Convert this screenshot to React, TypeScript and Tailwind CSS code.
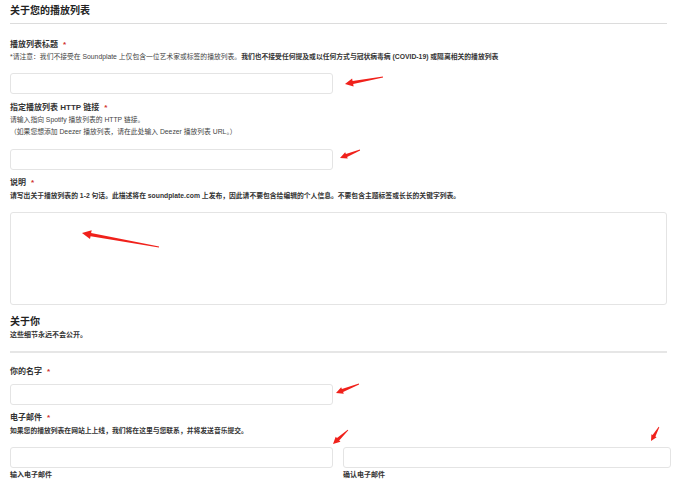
import { FC } from "react";

type Pt = [number, number];

// tapered red annotation arrow, thin at the tail and widening into the head
const arrowPoints = (tail: Pt, head: Pt, headLen = 8, headHalf = 4, shaft = 1.6) => {
  const dx = head[0] - tail[0];
  const dy = head[1] - tail[1];
  const len = Math.hypot(dx, dy);
  const ux = dx / len;
  const uy = dy / len;
  const nx = -uy;
  const ny = ux;
  const bx = head[0] - ux * headLen;
  const by = head[1] - uy * headLen;
  const pts: Pt[] = [
    [tail[0] + nx * 0.4, tail[1] + ny * 0.4],
    [bx + nx * shaft, by + ny * shaft],
    [bx + nx * headHalf, by + ny * headHalf],
    head,
    [bx - nx * headHalf, by - ny * headHalf],
    [bx - nx * shaft, by - ny * shaft],
    [tail[0] - nx * 0.4, tail[1] - ny * 0.4],
  ];
  return pts.map((p) => `${p[0].toFixed(1)},${p[1].toFixed(1)}`).join(" ");
};

const arrows: { tail: Pt; head: Pt; hl?: number; hh?: number }[] = [
  { tail: [383, 77], head: [345, 84] },
  { tail: [360, 150], head: [340, 158], hl: 7, hh: 3.5 },
  { tail: [159, 247], head: [82, 233], hl: 9, hh: 4.5 },
  { tail: [359, 384], head: [336, 393], hl: 7, hh: 3.5 },
  { tail: [348, 430], head: [333, 444], hl: 7, hh: 3.5 },
  { tail: [659, 427], head: [651, 441], hl: 6, hh: 3 },
];

const Label: FC<{ text: string; className?: string }> = ({ text, className = "" }) => (
  <div className={`text-[8px] font-bold leading-[10px] text-[#333] ${className}`}>
    {text}
    <span className="ml-[5px] text-[#d0312d]">*</span>
  </div>
);

const Input: FC<{ className?: string }> = ({ className = "" }) => (
  <div className={`h-[21px] rounded-[3px] border border-[#e4e4e4] bg-white ${className}`} />
);

export default function App() {
  return (
    <div className="relative h-[484px] w-[680px] overflow-hidden bg-white font-['Liberation_Sans','Noto_Sans_CJK_SC',sans-serif]">
      <div className="flex flex-col pl-[10px]">
        <h2 className="mt-[4px] text-[10px] font-bold leading-[14px] text-[#222]">关于您的播放列表</h2>
        <div className="mt-[5px] h-px w-[657px] bg-[#dcdcdc]" />

        {/* playlist title */}
        <Label text="播放列表标题" className="mt-[16px]" />
        <p className="mt-[2px] whitespace-nowrap text-[6.8px] leading-[10px] text-[#444]">
          *请注意：我们不接受在 Soundplate 上仅包含一位艺术家或标签的播放列表。
          <span className="font-semibold text-[#333]">
            我们也不接受任何提及或以任何方式与冠状病毒病 (COVID-19) 或隔离相关的播放列表
          </span>
        </p>
        <Input className="mt-[11px] w-[323px]" />

        {/* playlist link */}
        <Label text="指定播放列表 HTTP 链接" className="mt-[9px]" />
        <p className="mt-[2px] text-[6.8px] leading-[10px] text-[#444]">请输入指向 Spotify 播放列表的 HTTP 链接。</p>
        <p className="mt-[2px] text-[6.8px] leading-[10px] text-[#444]">
          （如果您想添加 Deezer 播放列表，请在此处输入 Deezer 播放列表 URL。）
        </p>
        <Input className="mt-[12px] w-[323px]" />

        {/* description */}
        <Label text="说明" className="mt-[8px]" />
        <p className="mt-[3px] whitespace-nowrap text-[6.8px] font-semibold leading-[10px] text-[#333]">
          请写出关于播放列表的 1-2 句话。此描述将在 soundplate.com 上发布，因此请不要包含给编辑的个人信息。不要包含主题标签或长长的关键字列表。
        </p>
        <div className="mt-[11px] h-[93px] w-[657px] rounded-[3px] border border-[#e4e4e4]" />

        <h2 className="mt-[10px] text-[10px] font-bold leading-[14px] text-[#222]">关于你</h2>
        <p className="mt-[1px] text-[7px] font-semibold leading-[10px] text-[#333]">这些细节永远不会公开。</p>
        <div className="mt-[11px] h-[2px] w-[657px] bg-[#e6e6e6]" />

        <Label text="你的名字" className="mt-[14px]" />
        <Input className="mt-[7px] w-[323px]" />

        <Label text="电子邮件" className="mt-[8px]" />
        <p className="mt-[3px] text-[6.8px] font-semibold leading-[10px] text-[#333]">
          如果您的播放列表在网站上上线，我们将在这里与您联系，并将发送音乐提交。
        </p>
        <div className="mt-[11px] flex gap-[10px]">
          <div className="flex w-[323px] shrink-0 flex-col">
            <Input />
            <span className="mt-[2px] text-[7px] font-semibold leading-[10px] text-[#333]">输入电子邮件</span>
          </div>
          <div className="flex w-[328px] shrink-0 flex-col">
            <Input />
            <span className="mt-[2px] text-[7px] font-semibold leading-[10px] text-[#333]">确认电子邮件</span>
          </div>
        </div>
      </div>

      {/* annotation arrows drawn over the form */}
      <svg className="pointer-events-none absolute inset-0" width={680} height={484} viewBox="0 0 680 484">
        {arrows.map((a, i) => (
          <polygon key={`arrow-${i}`} points={arrowPoints(a.tail, a.head, a.hl, a.hh)} fill="#f0211b" />
        ))}
      </svg>
    </div>
  );
}
